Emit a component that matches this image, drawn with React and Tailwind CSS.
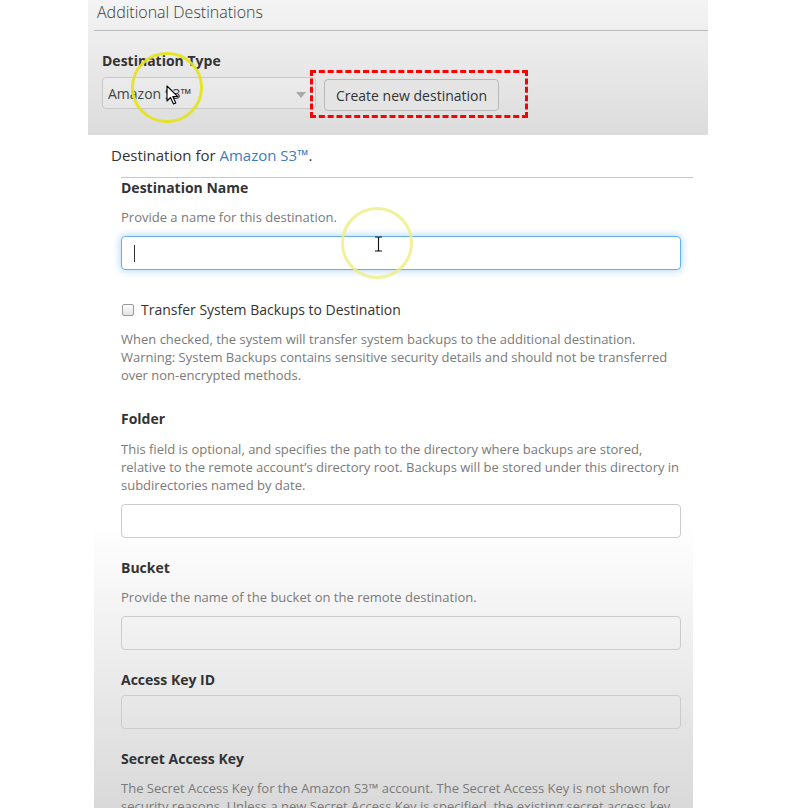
import React from 'react';

const font = { fontFamily: '"Open Sans", "Liberation Sans", sans-serif' };

const Label = ({ children, className = '' }) => (
    <div className={`text-[14px] leading-[20px] font-bold text-[#333] ${className}`}>{children}</div>
);

const Help = ({ children, className = '' }) => (
    <p className={`text-[13px] leading-[18px] text-[#7a7a7a] ${className}`}>{children}</p>
);

const Field = ({ className = '' }) => (
    <div className={`h-[34px] rounded-[4px] border border-[#cccccc] bg-transparent ${className}`} />
);

const ArrowCursor = () => (
    <svg width="14" height="20" viewBox="0 0 14 20">
        <path d="M1 1 L1 16 L4.5 12.5 L7.5 19 L9.8 18 L6.8 11.6 L11.8 11.6 Z" fill="#fff" stroke="#000" strokeWidth="1.1" strokeLinejoin="round" />
    </svg>
);

const IBeam = () => (
    <svg width="9" height="16" viewBox="0 0 9 16">
        <path d="M1 1 H3.5 Q4.5 1 4.5 2 V14 Q4.5 15 3.5 15 H1 M8 1 H5.5 Q4.5 1 4.5 2 M8 15 H5.5 Q4.5 15 4.5 14" fill="none" stroke="#111" strokeWidth="1.1" />
    </svg>
);

export default function App() {
    return (
        <div className="relative w-[790px] h-[808px] overflow-hidden bg-white" style={font}>
            {/* top panel */}
            <div className="ml-[88px] w-[620px] h-[135px] bg-gradient-to-b from-[#f4f4f4] to-[#dcdcdc]">
                <div className="ml-[6px] pt-[1px] pl-[3px] h-[31px] border-b border-[#b9b9b9]">
                    <h2 className="text-[16px] leading-[22px] font-light text-[#3a3a3a]">Additional Destinations</h2>
                </div>
                <div className="pl-[14px] pt-[20px]">
                    <Label>Destination Type</Label>
                    <div className="flex items-start gap-[8px] mt-[6px]">
                        <div className="relative w-[214px] h-[32px] rounded-[4px] border border-[#c8c8c8] bg-white/20 flex items-center pl-[5px] text-[14px] text-[#444]">
                            Amazon S3™
                            <span className="absolute right-[9px] top-[14px] w-0 h-0 border-l-[5px] border-r-[5px] border-t-[6px] border-l-transparent border-r-transparent border-t-[#a9a9a9]" />
                        </div>
                        <button className="mt-[2px] w-[175px] h-[32px] rounded-[4px] border border-[#b9b9b9] bg-[#e4e4e4] text-[14px] text-[#333]">
                            Create new destination
                        </button>
                    </div>
                </div>
            </div>

            {/* form panel */}
            <div className="ml-[94px] w-[599px] h-[673px] pl-[17px] pt-[10px] bg-[linear-gradient(to_bottom,#ffffff_0%,#ffffff_58%,#d9d9d9_100%)]">
                <div className="text-[15px] leading-[20px] text-[#333]">
                    Destination for <span className="text-[#3b7dbf]">Amazon S3™</span>.
                </div>
                <div className="ml-[10px] mt-[12px] border-t border-[#c9c9c9] pr-[12px]">
                    <Label>Destination Name</Label>
                    <Help className="mt-[10px]">Provide a name for this destination.</Help>
                    <div className="mt-[10px] h-[34px] rounded-[4px] border border-[#66afe9] shadow-[0_0_8px_rgba(102,175,233,0.6)] bg-white flex items-center pl-[12px]">
                        <span className="w-px h-[17px] bg-[#333]" />
                    </div>

                    <label className="mt-[30px] flex items-center gap-[7px] text-[14px] leading-[20px] text-[#333]">
                        <span className="ml-[1px] w-[12px] h-[12px] rounded-[2px] border border-[#9a9a9a] bg-gradient-to-b from-[#fdfdfd] to-[#e2e2e2]" />
                        Transfer System Backups to Destination
                    </label>
                    <Help className="mt-[10px]">
                        When checked, the system will transfer system backups to the additional destination. Warning: System Backups contains sensitive security details and should not be transferred over non-encrypted methods.
                    </Help>

                    <Label className="mt-[25px]">Folder</Label>
                    <Help className="mt-[11px]">
                        This field is optional, and specifies the path to the directory where backups are stored, relative to the remote account’s directory root. Backups will be stored under this directory in subdirectories named by date.
                    </Help>
                    <Field className="mt-[10px] bg-white" />

                    <Label className="mt-[20px]">Bucket</Label>
                    <Help className="mt-[10px]">Provide the name of the bucket on the remote destination.</Help>
                    <Field className="mt-[10px]" />

                    <Label className="mt-[20px]">Access Key ID</Label>
                    <Field className="mt-[5px]" />

                    <Label className="mt-[20px]">Secret Access Key</Label>
                    <Help className="mt-[10px]">
                        The Secret Access Key for the Amazon S3™ account. The Secret Access Key is not shown for security reasons. Unless a new Secret Access Key is specified, the existing secret access key will remain in use.
                    </Help>
                </div>
            </div>

            {/* annotations */}
            <div className="absolute left-[310px] top-[70px] w-[218px] h-[48px] border-[3px] border-dashed border-[#ff0000]" />
            <div className="absolute left-[131px] top-[52px] w-[72px] h-[71px] rounded-full border-[3px] border-[#e3e31a]/90" />
            <div className="absolute left-[341px] top-[207px] w-[72px] h-[72px] rounded-full border-[3px] border-[#eeee80]/80" />
            <div className="absolute left-[166px] top-[85px]"><ArrowCursor /></div>
            <div className="absolute left-[374px] top-[236px]"><IBeam /></div>
        </div>
    );
}
